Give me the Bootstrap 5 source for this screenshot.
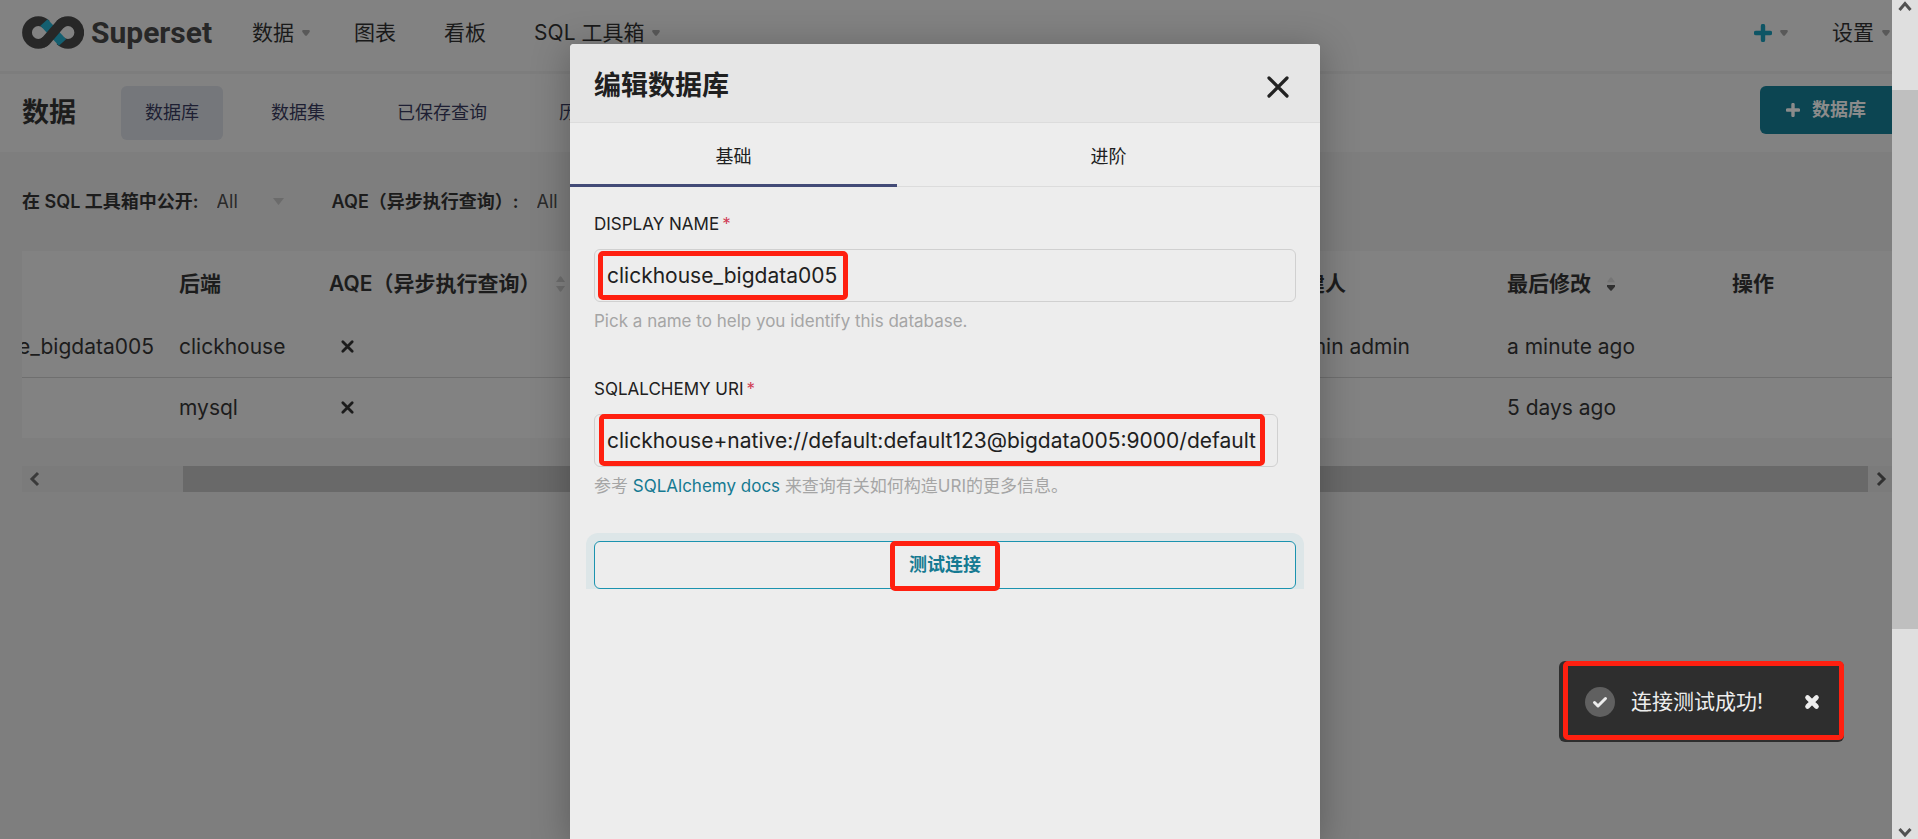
<!DOCTYPE html>
<html lang="zh-CN">
<head>
<meta charset="utf-8">
<meta name="viewport" content="width=device-width, initial-scale=1">
<title>Superset</title>
<link href="https://cdn.jsdelivr.net/npm/bootstrap@5.3.0/dist/css/bootstrap.min.css" rel="stylesheet">
<style>
  body { font-family: Inter, "Noto Sans CJK SC", sans-serif; font-size: 21px; line-height: 30px; color: #1c1c1c; background: #7e7e7e; }
  a { color: inherit; text-decoration: none; }
  .caret { width: 8px; height: 6px; fill: #595959; flex: none; }
  .fs-s { font-size: 18px; line-height: 26px; }

  /* top navigation */
  .topbar { height: 74px; background: #828282; border-bottom: 3px solid #7d7d7d; padding: 0 2px 6px 22px; }
  .brand-name { font: 700 30px/34px Roboto, sans-serif; color: #272727; margin-left: 7px; }
  .nav-item-link { display: flex; align-items: center; gap: 8px; color: #1a1a1a; }
  .nav-item-link.has-caret:not(:last-child) { margin-right: -4px; }
  .nav-item-link.teal { color: #0e5565; }

  /* section header */
  .subbar { height: 78px; background: #828282; padding: 12px 0 12px 22px; }
  .subbar h1 { font-size: 27px; line-height: 54px; font-weight: 700; width: 99px; margin: 0; }
  .subbar .tab-link { padding: 14px 24px; border-radius: 6px; color: #1e1f33; }
  .subbar .tab-link.active { background: #75777b; }
  .btn-db { background: #0c4552; color: #8b8b8b; border: 0; border-radius: 6px 0 0 6px; height: 48px; width: 132px; font-weight: 700; gap: 12px; }

  /* filters and table */
  .filters { height: 99px; padding-left: 22px; }
  .filters label { font-weight: 600; margin-right: 18px; }
  .filters select { appearance: none; border: 0; background: transparent; color: #2a2a2a; padding: 0; width: 56px; font-size: 18px; }
  .list-area { margin-left: 22px; }
  .db-table { table-layout: fixed; width: 100%; background: #828282; }
  .db-table th { height: 66px; padding: 0; font-weight: 600; white-space: nowrap; vertical-align: middle; }
  .db-table td { height: 60px; padding: 0; white-space: nowrap; vertical-align: middle; }
  .db-table tbody tr + tr td { height: 61px; border-top: 1px solid #6f6f6f; }
  .tail { display: flex; justify-content: flex-end; overflow: hidden; width: 132px; }
  .cross { width: 15px; height: 15px; margin-left: 11px; display: block; }
  .hbar { height: 26px; margin-top: 28px; background: #7b7b7b; }
  .hbar .thumb { background: #696969; width: calc(90% + 2px); }
  .hbar .arrow { width: 24px; }

  /* page scrollbar */
  .vbar { width: 26px; background: #dfdfdf; flex: none; }
  .vbar .thumb { height: 539px; background: #bfbfbf; }
  .vbar .top-part { height: 90px; }

  /* dialog */
  .dialog-layer { top: 44px; bottom: 0; left: 0; right: 0; }
  .dialog { width: 750px; background: #ededed; border-radius: 4px 4px 0 0; box-shadow: 0 6px 36px 2px rgba(0,0,0,.26); color: #202020; margin-right: 2px; }
  .dialog-head { background: #e6e6e6; height: 79px; border-bottom: 1px solid #dcdcdc; border-radius: 4px 4px 0 0; padding: 6px 31px 0 24px; }
  .dialog-head h2 { font-size: 27px; line-height: 40px; font-weight: 700; margin: 0; }
  .close-x { border: 0; background: none; padding: 0; display: flex; margin-top: 2px; }
  .dialog-tabs { height: 64px; border-bottom: 1px solid #dcdcdc; }
  .dialog-tabs button { border: 0; background: none; padding: 6px 0 0; color: inherit; margin-bottom: -1px; border-bottom: 3px solid transparent; flex: 1; }
  .dialog-tabs button.active { flex: none; width: 43.6%; border-bottom-color: #434b77; }
  .dialog-body { padding: 24px; }
  .dialog-body label { font-size: 17px; line-height: 26px; margin-bottom: 12px; display: block; }
  .star { color: #d03d55; margin-left: 3px; }
  .dialog-body input { width: 100%; height: 53px; border: 1px solid #d0d0d0; border-radius: 6px; background: transparent; padding: 0 12px; color: #202020; font-size: 21px; }
  .uri-field { margin-right: 18px; }
  .hint { font-size: 17px; line-height: 26px; color: #a5a5a5; margin: 6px 0 42px; }
  .hint.before-action { margin-bottom: 34px; }
  .hint a { color: #157a92; }
  .halo { background: #dde6e8; margin: 0 -8px; padding: 8px 8px 0; border-radius: 12px 12px 0 0; }
  .btn-test { width: 100%; height: 48px; border: 1px solid #1b93af; border-radius: 6px; background: #ededed; color: #157a92; font-weight: 700; display: block; }
  .redbox { position: absolute; border: 5px solid #ff2010; border-radius: 5px; pointer-events: none; }
  .box-name { left: 4px; top: 2px; width: 250px; height: 49px; }
  .box-uri { left: 5px; top: 0; width: 666px; height: 52px; }
  .box-test { left: calc(50% - 55px); top: 0; width: 110px; height: 50px; }

  /* notification */
  .notice { right: 48px; bottom: 97px; width: 285px; height: 81px; background: #2e2e2e; border-radius: 6px; padding: 0 24px 0 26px; }
  .notice, .notice button { color: #ededed; }
  .notice button { border: 0; background: none; padding: 0; display: flex; }
  .box-notice { left: 4px; top: 0; right: 0; bottom: 2px; }
</style>
</head>
<body class="d-flex vh-100 overflow-hidden">

<svg width="0" height="0" class="position-absolute" aria-hidden="true">
  <symbol id="caret" viewBox="0 0 9 7"><path d="M1.500 0h6C9 0 9.300 1.500 8.500 2.700L5.500 6.300C5 7 4 7 3.500 6.300L.5 2.700C-.3 1.500 0 0 1.500 0z"/></symbol>
  <symbol id="times" viewBox="0 0 16 16"><path d="M3.500 3.500l9 9M12.500 3.500l-9 9" fill="none" stroke="currentColor" stroke-width="4.600" stroke-linecap="round"/></symbol>
  <symbol id="thin-times" viewBox="0 0 16 16"><path d="M3 3l10 10M13 3L3 13" fill="none" stroke="currentColor" stroke-width="3" stroke-linecap="round"/></symbol>
  <symbol id="plus" viewBox="0 0 18 18"><path d="M9 2v14M2 9h14" fill="none" stroke="currentColor" stroke-width="4.400" stroke-linecap="round"/></symbol>
</svg>

<main class="flex-grow-1 position-relative overflow-hidden">
  <nav class="topbar d-flex align-items-center">
    <a href="#" class="d-flex align-items-center">
      <svg width="62" height="33" viewBox="0 0 62 33" fill="none" stroke-width="9.800">
        <path d="M24.300 8.500A11.300 11.300 0 1 0 24.300 24.500M38 8.500A11.300 11.300 0 1 1 38 24.500" stroke="#272727"/>
        <path d="M22 6.500L40.500 26.500" stroke="#145f70"/>
        <path d="M20.300 27.100C22 26.500 23.400 25.600 24.300 24.500L38 8.500C39.200 7.300 40.500 6.400 42 5.900" stroke="#272727"/>
      </svg>
      <span class="brand-name">Superset</span>
    </a>
    <div class="d-flex gap-5 ms-4 ps-3">
      <a href="#" class="nav-item-link has-caret">数据 <svg class="caret"><use href="#caret"/></svg></a>
      <a href="#" class="nav-item-link">图表</a>
      <a href="#" class="nav-item-link">看板</a>
      <a href="#" class="nav-item-link has-caret">SQL 工具箱 <svg class="caret"><use href="#caret"/></svg></a>
    </div>
    <div class="d-flex gap-5 ms-auto">
      <a href="#" class="nav-item-link has-caret teal" aria-label="新增"><svg width="18" height="18"><use href="#plus"/></svg><svg class="caret"><use href="#caret"/></svg></a>
      <a href="#" class="nav-item-link has-caret">设置 <svg class="caret"><use href="#caret"/></svg></a>
    </div>
  </nav>

  <header class="subbar d-flex">
    <h1>数据</h1>
    <div class="d-flex gap-4 fs-s flex-grow-1">
      <a href="#" class="tab-link active">数据库</a>
      <a href="#" class="tab-link">数据集</a>
      <a href="#" class="tab-link">已保存查询</a>
      <a href="#" class="tab-link">历史查询</a>
    </div>
    <button class="btn-db fs-s d-flex align-items-center justify-content-center"><svg width="14" height="14"><use href="#plus"/></svg>数据库</button>
  </header>

  <section class="filters d-flex align-items-center fs-s">
    <label for="expose">在 SQL 工具箱中公开:</label>
    <select id="expose"><option>All</option></select>
    <svg width="11" height="7" viewBox="0 0 11 7"><path d="M0 0h11L5.500 7z" fill="#6b6b6b"/></svg>
    <label for="aqe" class="ms-5">AQE（异步执行查询）:</label>
    <select id="aqe"><option>All</option></select>
  </section>

  <section class="list-area">
    <table class="db-table">
      <colgroup>
        <col width="157"><col width="150"><col width="954"><col width="224"><col width="225"><col>
      </colgroup>
      <thead>
        <tr>
          <th></th>
          <th>后端</th>
          <th><span class="d-flex align-items-center">AQE（异步执行查询）
            <svg width="9" height="16" viewBox="0 0 9 16" class="ms-3" fill="#6e6e6e"><path d="M0 6L3.500 1q1-1.300 2 0L9 6zM0 10h9l-3.500 5q-1 1.300-2 0z"/></svg></span></th>
          <th>创建人</th>
          <th><span class="d-flex align-items-center">最后修改
            <svg width="8" height="16" viewBox="0 0 9 16" class="ms-3"><path d="M0 6L3.500 1q1-1.300 2 0L9 6z" fill="#757575"/><path d="M0 9h9v2l-3.500 4q-1 1.300-2 0L0 11z" fill="#303030"/></svg></span></th>
          <th>操作</th>
        </tr>
      </thead>
      <tbody>
        <tr><td><span class="tail">clickhouse_bigdata005</span></td><td>clickhouse</td><td><svg class="cross"><use href="#thin-times"/></svg></td><td>admin admin</td><td>a minute ago</td><td></td></tr>
        <tr><td></td><td>mysql</td><td><svg class="cross"><use href="#thin-times"/></svg></td><td></td><td>5 days ago</td><td></td></tr>
      </tbody>
    </table>
    <div class="hbar d-flex align-items-center" aria-hidden="true">
      <svg class="arrow" height="16" viewBox="0 0 24 16"><path d="M16 2l-6 6 6 6" fill="none" stroke="#3a3a3a" stroke-width="3"/></svg>
      <div class="thumb h-100 ms-auto"></div>
      <svg class="arrow" height="16" viewBox="0 0 24 16"><path d="M10 2l6 6-6 6" fill="none" stroke="#303030" stroke-width="3"/></svg>
    </div>
  </section>

  <div class="dialog-layer position-absolute d-flex justify-content-center">
    <div class="dialog" role="dialog" aria-labelledby="dlg-title">
      <div class="dialog-head d-flex align-items-center justify-content-between">
        <h2 id="dlg-title">编辑数据库</h2>
        <button class="close-x" aria-label="Close"><svg width="22" height="22" viewBox="0 0 22 22"><path d="M2 2l18 18M20 2L2 20" stroke="#222" stroke-width="3.200" stroke-linecap="round"/></svg></button>
      </div>
      <div class="dialog-tabs d-flex fs-s" role="tablist">
        <button class="active" role="tab">基础</button>
        <button role="tab">进阶</button>
      </div>
      <form class="dialog-body">
        <label for="dbname">DISPLAY NAME<span class="star">*</span></label>
        <div class="position-relative">
          <input id="dbname" type="text" value="clickhouse_bigdata005">
          <span class="redbox box-name"></span>
        </div>
        <p class="hint">Pick a name to help you identify this database.</p>
        <label for="uri">SQLALCHEMY URI<span class="star">*</span></label>
        <div class="position-relative uri-field">
          <input id="uri" type="text" value="clickhouse+native://default:default123@bigdata005:9000/default">
          <span class="redbox box-uri"></span>
        </div>
        <p class="hint before-action">参考 <a href="#">SQLAlchemy docs</a> 来查询有关如何构造URI的更多信息。</p>
        <div class="halo">
          <div class="position-relative">
            <button type="button" class="btn-test fs-s">测试连接</button>
            <span class="redbox box-test"></span>
          </div>
        </div>
      </form>
    </div>
  </div>

  <div class="notice position-absolute d-flex align-items-center" role="status">
    <svg width="30" height="30" viewBox="0 0 30 30"><circle cx="15" cy="15" r="15" fill="#606060"/><path d="M9.500 15.500l3.500 3.500 7.500-7.500" fill="none" stroke="#ededed" stroke-width="3" stroke-linecap="round" stroke-linejoin="round"/></svg>
    <span class="ms-3">连接测试成功!</span>
    <button class="ms-auto" aria-label="关闭"><svg width="16" height="16"><use href="#times"/></svg></button>
    <span class="redbox box-notice"></span>
  </div>
</main>

<aside class="vbar d-flex flex-column" aria-hidden="true">
  <div class="top-part"><svg width="26" height="14" viewBox="0 0 26 14" class="d-block"><path d="M7.500 10L13 3.500 18.500 10" fill="none" stroke="#505050" stroke-width="3"/></svg></div>
  <div class="thumb"></div>
  <svg width="26" height="14" viewBox="0 0 26 14" class="d-block mt-auto"><path d="M7.500 4L13 10 18.500 4" fill="none" stroke="#505050" stroke-width="3"/></svg>
</aside>

<script src="https://cdn.jsdelivr.net/npm/bootstrap@5.3.0/dist/js/bootstrap.bundle.min.js"></script>
</body>
</html>
